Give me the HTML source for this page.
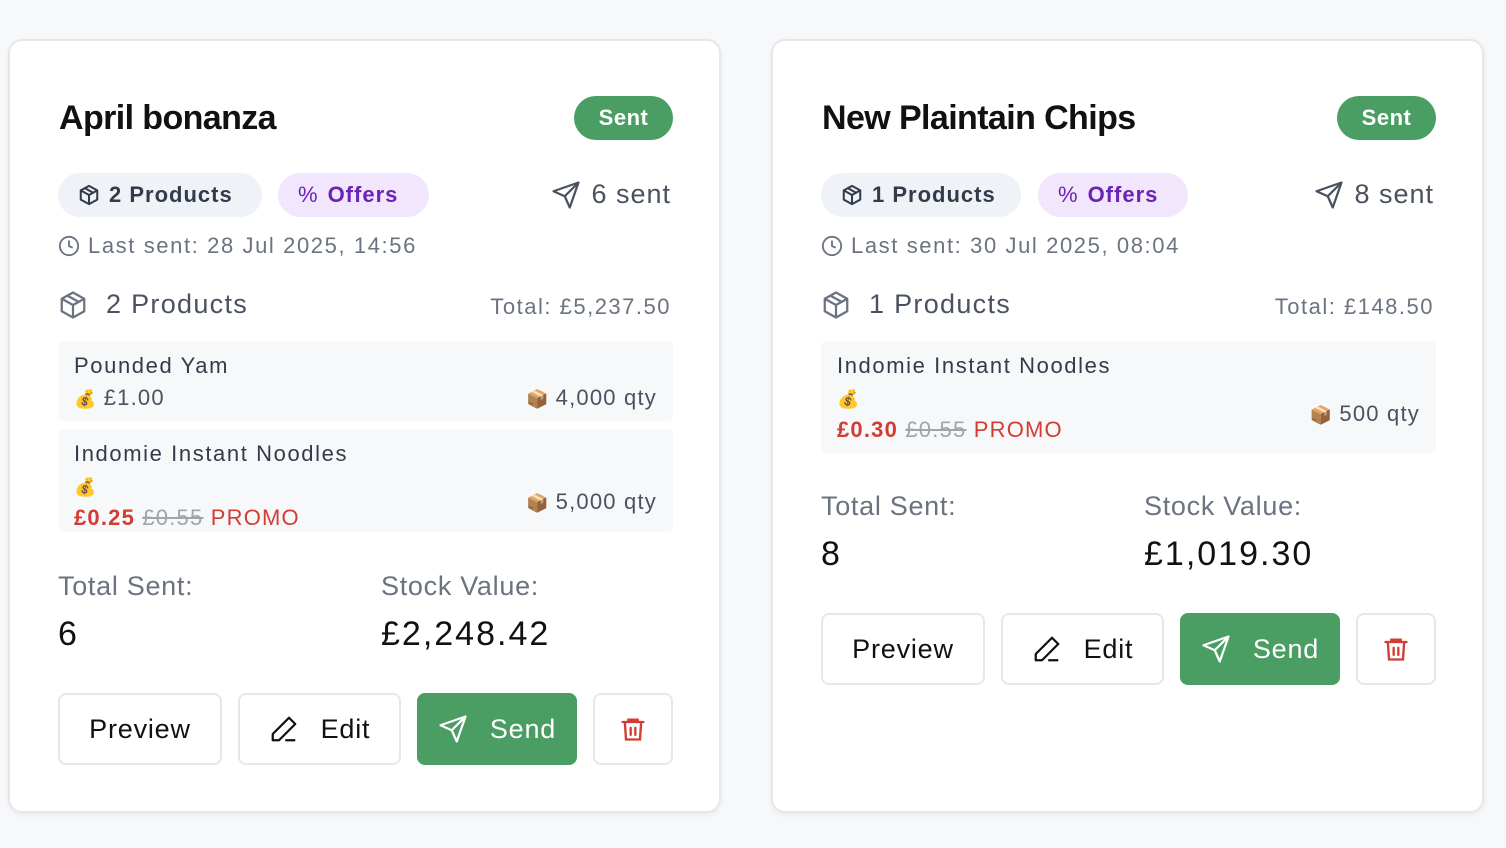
<!DOCTYPE html>
<html><head><meta charset="utf-8"><style>
*{box-sizing:border-box;margin:0;padding:0}
body{width:1506px;height:848px;background:#f7f8fa;font-family:"Liberation Sans",sans-serif;position:relative;overflow:hidden;color:#111}
.card{position:absolute;top:39px;width:713px;height:774px;background:#fff;border:2px solid #e6e7ea;border-radius:14px;box-shadow:0 2px 6px rgba(0,0,0,.06)}
.a{position:absolute;white-space:nowrap}
.title{font-size:34px;font-weight:bold;letter-spacing:-0.6px;color:#111;top:58px;left:49px}
.badge{top:55px;height:44px;width:99px;border-radius:22px;background:#4a9e63;color:#fff;font-size:22px;font-weight:bold;display:flex;align-items:center;justify-content:center;letter-spacing:0.5px}
.chip{top:132px;height:44px;border-radius:22px;font-size:22px;font-weight:bold;display:flex;align-items:center;gap:9px;padding:0 20px;letter-spacing:1px}
.c1{background:#eff2f7;color:#333b4a}
.c2{background:#f1e6fc;color:#6b22b5}
.sent{top:138px;font-size:27px;color:#4a5160;display:flex;align-items:center;gap:10px;letter-spacing:1px}
.last{top:192px;font-size:22px;color:#6b7280;display:flex;align-items:center;gap:8px;letter-spacing:1.6px}
.prod{top:248px;font-size:27px;color:#4a5160;display:flex;align-items:center;gap:18px;letter-spacing:1.3px}
.tot{top:253px;font-size:22px;color:#6b7280;letter-spacing:1.5px}
.item{left:48px;width:615px;background:#f7f8fa;border-radius:6px}
.nm{font-size:22px;color:#333b4a;left:16px;letter-spacing:1.6px}
.pr{font-size:22px;color:#4a5160;left:16px;letter-spacing:1.2px}
.red{color:#d33c33}
.strike{color:#a0a4ab;text-decoration:line-through}
.qty{font-size:22px;color:#4a5160;right:16px;letter-spacing:1.2px}
.em{font-size:18px;letter-spacing:0}
.lbl{font-size:27px;color:#6b7280;letter-spacing:0.7px}
.val{font-size:34px;color:#111;letter-spacing:2px}
.btn{height:72px;border:2px solid #e5e7eb;border-radius:8px;background:#fff;font-size:27px;color:#111;display:flex;align-items:center;justify-content:center;gap:22px;letter-spacing:0.8px}
.send{background:#4a9e63;border-color:#4a9e63;color:#fff}
</style></head><body>

<!-- Card 1 -->
<div class="card" style="left:8px">
<div class="a title">April bonanza</div>
<div class="a badge" style="left:564px">Sent</div>
<div class="a chip c1" style="left:48px;width:204px"><svg width="22" height="22" viewBox="0 0 24 24" fill="none" stroke="#333b4a" stroke-width="2.2" stroke-linejoin="round"><path d="M12 2 21 7v10l-9 5-9-5V7z"/><path d="M3 7l9 5 9-5M12 12v10M7.5 4.5l9 5"/></svg>2 Products</div>
<div class="a chip c2" style="left:268px;width:151px"><span style="font-weight:normal">%</span>Offers</div>
<div class="a sent" style="right:48px"><svg width="30" height="30" viewBox="0 0 24 24" fill="none" stroke="#4a5160" stroke-width="1.8" stroke-linejoin="round"><path d="M22 2 11 13M22 2l-7 20-4-9-9-4z"/></svg>6 sent</div>
<div class="a last" style="left:48px"><svg width="22" height="22" viewBox="0 0 24 24" fill="none" stroke="#6b7280" stroke-width="2"><circle cx="12" cy="12" r="10"/><path d="M12 6v6l4 2"/></svg>Last sent: 28 Jul 2025, 14:56</div>
<div class="a prod" style="left:48px"><svg width="30" height="30" viewBox="0 0 24 24" fill="none" stroke="#6b7280" stroke-width="1.8" stroke-linejoin="round"><path d="M12 2 21 7v10l-9 5-9-5V7z"/><path d="M3 7l9 5 9-5M12 12v10M7.5 4.5l9 5"/></svg>2 Products</div>
<div class="a tot" style="right:48px">Total: £5,237.50</div>
<div class="a item" style="top:300px;height:80px">
 <div class="a nm" style="top:12px">Pounded Yam</div>
 <div class="a pr" style="top:44px"><span class="em">💰</span> £1.00</div>
 <div class="a qty" style="top:44px"><span class="em">📦</span> 4,000 qty</div>
</div>
<div class="a item" style="top:388px;height:103px">
 <div class="a nm" style="top:12px">Indomie Instant Noodles</div>
 <div class="a pr" style="top:44px"><span class="em">💰</span></div>
 <div class="a pr red" style="top:76px"><b>£0.25</b> <span class="strike">£0.55</span> PROMO</div>
 <div class="a qty" style="top:60px"><span class="em">📦</span> 5,000 qty</div>
</div>
<div class="a lbl" style="left:48px;top:530px">Total Sent:</div>
<div class="a lbl" style="left:371px;top:530px">Stock Value:</div>
<div class="a val" style="left:48px;top:574px">6</div>
<div class="a val" style="left:371px;top:574px">£2,248.42</div>
<div class="a btn" style="left:48px;top:652px;width:164px">Preview</div>
<div class="a btn" style="left:228px;top:652px;width:163px"><svg width="30" height="30" viewBox="0 0 24 24" fill="none" stroke="#111" stroke-width="1.8" stroke-linejoin="round"><path d="M16 3l5 5L8 21H3v-5z"/><path d="M13 21h8"/></svg>Edit</div>
<div class="a btn send" style="left:407px;top:652px;width:160px"><svg width="30" height="30" viewBox="0 0 24 24" fill="none" stroke="#fff" stroke-width="1.8" stroke-linejoin="round"><path d="M22 2 11 13M22 2l-7 20-4-9-9-4z"/></svg>Send</div>
<div class="a btn" style="left:583px;top:652px;width:80px"><svg width="28" height="28" viewBox="0 0 24 24" fill="none" stroke="#d33c33" stroke-width="2" stroke-linecap="round"><path d="M3 6h18M8 6V4h8v2M5 6l1 15h12l1-15M10 11v6M14 11v6"/></svg></div>
</div>

<!-- Card 2 -->
<div class="card" style="left:771px">
<div class="a title">New Plaintain Chips</div>
<div class="a badge" style="left:564px">Sent</div>
<div class="a chip c1" style="left:48px;width:200px"><svg width="22" height="22" viewBox="0 0 24 24" fill="none" stroke="#333b4a" stroke-width="2.2" stroke-linejoin="round"><path d="M12 2 21 7v10l-9 5-9-5V7z"/><path d="M3 7l9 5 9-5M12 12v10M7.5 4.5l9 5"/></svg>1 Products</div>
<div class="a chip c2" style="left:265px;width:150px"><span style="font-weight:normal">%</span>Offers</div>
<div class="a sent" style="right:48px"><svg width="30" height="30" viewBox="0 0 24 24" fill="none" stroke="#4a5160" stroke-width="1.8" stroke-linejoin="round"><path d="M22 2 11 13M22 2l-7 20-4-9-9-4z"/></svg>8 sent</div>
<div class="a last" style="left:48px"><svg width="22" height="22" viewBox="0 0 24 24" fill="none" stroke="#6b7280" stroke-width="2"><circle cx="12" cy="12" r="10"/><path d="M12 6v6l4 2"/></svg>Last sent: 30 Jul 2025, 08:04</div>
<div class="a prod" style="left:48px"><svg width="30" height="30" viewBox="0 0 24 24" fill="none" stroke="#6b7280" stroke-width="1.8" stroke-linejoin="round"><path d="M12 2 21 7v10l-9 5-9-5V7z"/><path d="M3 7l9 5 9-5M12 12v10M7.5 4.5l9 5"/></svg>1 Products</div>
<div class="a tot" style="right:48px">Total: £148.50</div>
<div class="a item" style="top:300px;height:112px">
 <div class="a nm" style="top:12px">Indomie Instant Noodles</div>
 <div class="a pr" style="top:44px"><span class="em">💰</span></div>
 <div class="a pr red" style="top:76px"><b>£0.30</b> <span class="strike">£0.55</span> PROMO</div>
 <div class="a qty" style="top:60px"><span class="em">📦</span> 500 qty</div>
</div>
<div class="a lbl" style="left:48px;top:450px">Total Sent:</div>
<div class="a lbl" style="left:371px;top:450px">Stock Value:</div>
<div class="a val" style="left:48px;top:494px">8</div>
<div class="a val" style="left:371px;top:494px">£1,019.30</div>
<div class="a btn" style="left:48px;top:572px;width:164px">Preview</div>
<div class="a btn" style="left:228px;top:572px;width:163px"><svg width="30" height="30" viewBox="0 0 24 24" fill="none" stroke="#111" stroke-width="1.8" stroke-linejoin="round"><path d="M16 3l5 5L8 21H3v-5z"/><path d="M13 21h8"/></svg>Edit</div>
<div class="a btn send" style="left:407px;top:572px;width:160px"><svg width="30" height="30" viewBox="0 0 24 24" fill="none" stroke="#fff" stroke-width="1.8" stroke-linejoin="round"><path d="M22 2 11 13M22 2l-7 20-4-9-9-4z"/></svg>Send</div>
<div class="a btn" style="left:583px;top:572px;width:80px"><svg width="28" height="28" viewBox="0 0 24 24" fill="none" stroke="#d33c33" stroke-width="2" stroke-linecap="round"><path d="M3 6h18M8 6V4h8v2M5 6l1 15h12l1-15M10 11v6M14 11v6"/></svg></div>
</div>
</body></html>
